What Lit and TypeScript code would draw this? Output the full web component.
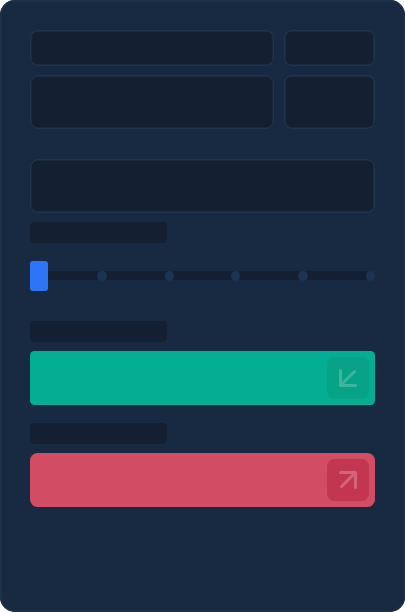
import { LitElement, html, css, svg } from "lit";
import { customElement } from "lit/decorators.js";

@customElement("app-root")
export class AppRoot extends LitElement {
  static styles = css`
    :host { display: block; }
    * { box-sizing: border-box; }
    .panel {
      width: 405px;
      height: 612px;
      padding: 30px;
      box-shadow: inset 0 0 0 1.5px #1e3249;
      border-radius: 15px;
      background: #182a41;
      display: flex;
      flex-direction: column;
    }
    .row {
      display: grid;
      grid-template-columns: 244px 91.5px;
      column-gap: 9.5px;
    }
    .head { height: 36px; margin: 0 0 9px; }
    .field {
      box-shadow: inset 0 0 0 1.5px #20344b;
      border-radius: 7.5px;
      background: #141f31;
    }
    .tall { height: 54px; }
    .single { margin-top: 30px; }
    .label {
      width: 136.5px;
      height: 21px;
      border-radius: 4.5px;
      background: #141f31;
      margin-top: 9px;
    }
    .slider {
      position: relative;
      height: 30px;
      margin: 18px 0 30px;
      display: flex;
      align-items: center;
    }
    .track {
      width: 100%;
      height: 9px;
      margin: 0 4px 1px 0;
      background: #141f31;
    }
    .handle {
      position: absolute;
      left: 0;
      top: 0;
      width: 18px;
      height: 30px;
      border-radius: 3px;
      background: #2d74f7;
    }
    .dot {
      position: absolute;
      top: 10px;
      width: 9.5px;
      height: 9.5px;
      border-radius: 50%;
      background: #1d3353;
    }
    .slider + .label { margin-top: 0; }
    .action {
      height: 54px;
      margin: 9px 0;
      padding-right: 6px;
      display: flex;
      align-items: center;
      justify-content: flex-end;
    }
    .buy { background: #04ae92; border-radius: 4.5px; }
    .sell { background: #d24c64; border-radius: 7.5px; }
    .tile { width: 42px; height: 42px; border-radius: 7.5px; }
    .buy .tile { background: #08a287; color: #3cb69f; }
    .sell .tile { background: #c2374f; color: #d16579; }
    svg { display: block; }
  `;

  private stops = [67, 134.5, 200.5, 268, 335.5];

  private arrow(d: string) {
    return html`<svg width="42" height="42" viewBox="0 0 42 42">
      ${svg`<path d=${d} fill="none" stroke="currentColor" stroke-width="3" stroke-linecap="round" stroke-linejoin="round" />`}
    </svg>`;
  }

  render() {
    return html`
      <div class="panel">
        <div class="row head"><div class="field"></div><div class="field"></div></div>
        <div class="row tall"><div class="field"></div><div class="field"></div></div>
        <div class="field tall single"></div>
        <div class="label"></div>
        <div class="slider">
          <div class="track"></div>
          ${this.stops.map((x) => html`<div class="dot" style="left:${x}px"></div>`)}
          <div class="handle"></div>
        </div>
        <div class="label"></div>
        <div class="action buy">
          <div class="tile">${this.arrow("M13.5 13.5V28.5H28.5M13.5 28.5L27.5 14.5")}</div>
        </div>
        <div class="label"></div>
        <div class="action sell">
          <div class="tile">${this.arrow("M13.5 13.5H28.5V28.5M28.5 13.5L14.5 27.5")}</div>
        </div>
      </div>
    `;
  }
}
